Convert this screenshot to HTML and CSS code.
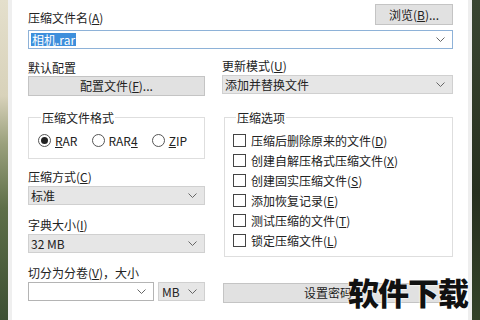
FILE: index.html
```html
<!DOCTYPE html>
<html lang="zh-CN">
<head>
  <meta charset="UTF-8">
  <title>压缩文件名和参数</title>
  <link rel="stylesheet" href="styles.css">
</head>
<body>
  <div class="photo left"></div>
  <div class="window">
    <div class="dialog">
      <div class="top-row">
        <span class="label">压缩文件名(<u>A</u>)</span>
        <button class="btn browse">浏览(<u>B</u>)...</button>
      </div>
      <div class="combo edit focus">
        <span class="sel">相机.rar</span>
        <svg class="chev" width="9" height="5" viewBox="0 0 9 5"><path d="M0.5 0.5 L4.5 4.5 L8.5 0.5" fill="none" stroke="#666" stroke-width="1"/></svg>
      </div>

      <div class="cols">
        <div class="col">
          <div class="label first">默认配置</div>
          <button class="btn wide">配置文件(<u>F</u>)...</button>

          <fieldset class="group format">
            <legend>压缩文件格式</legend>
            <div class="radios">
              <span class="radio"><span class="dot on"></span><span><u>R</u>AR</span></span>
              <span class="radio"><span class="dot"></span><span>RAR<u>4</u></span></span>
              <span class="radio"><span class="dot"></span><span><u>Z</u>IP</span></span>
            </div>
          </fieldset>

          <div class="label gap">压缩方式(<u>C</u>)</div>
          <div class="combo">
            <span>标准</span>
            <svg class="chev" width="9" height="5" viewBox="0 0 9 5"><path d="M0.5 0.5 L4.5 4.5 L8.5 0.5" fill="none" stroke="#666" stroke-width="1"/></svg>
          </div>

          <div class="label gap">字典大小(<u>I</u>)</div>
          <div class="combo">
            <span>32 MB</span>
            <svg class="chev" width="9" height="5" viewBox="0 0 9 5"><path d="M0.5 0.5 L4.5 4.5 L8.5 0.5" fill="none" stroke="#666" stroke-width="1"/></svg>
          </div>

          <div class="label gap">切分为分卷(<u>V</u>)，大小</div>
          <div class="split">
            <div class="combo edit volume">
              <span></span>
              <svg class="chev" width="9" height="5" viewBox="0 0 9 5"><path d="M0.5 0.5 L4.5 4.5 L8.5 0.5" fill="none" stroke="#666" stroke-width="1"/></svg>
            </div>
            <div class="combo unit">
              <span>MB</span>
              <svg class="chev" width="9" height="5" viewBox="0 0 9 5"><path d="M0.5 0.5 L4.5 4.5 L8.5 0.5" fill="none" stroke="#666" stroke-width="1"/></svg>
            </div>
          </div>
        </div>

        <div class="col">
          <div class="label upd">更新模式(<u>U</u>)</div>
          <div class="combo">
            <span>添加并替换文件</span>
            <svg class="chev" width="9" height="5" viewBox="0 0 9 5"><path d="M0.5 0.5 L4.5 4.5 L8.5 0.5" fill="none" stroke="#666" stroke-width="1"/></svg>
          </div>

          <fieldset class="group options">
            <legend>压缩选项</legend>
            <div class="check"><span class="box"></span><span>压缩后删除原来的文件(<u>D</u>)</span></div>
            <div class="check"><span class="box"></span><span>创建自解压格式压缩文件(<u>X</u>)</span></div>
            <div class="check"><span class="box"></span><span>创建固实压缩文件(<u>S</u>)</span></div>
            <div class="check"><span class="box"></span><span>添加恢复记录(<u>E</u>)</span></div>
            <div class="check"><span class="box"></span><span>测试压缩的文件(<u>T</u>)</span></div>
            <div class="check"><span class="box"></span><span>锁定压缩文件(<u>L</u>)</span></div>
          </fieldset>

          <button class="btn password">设置密码</button>
        </div>
      </div>
    </div>
  </div>
  <div class="photo right"></div>

  <div class="watermark">软件下载</div>
</body>
</html>
```

FILE: styles.css
```css
body {
  margin: 0;
  width: 480px;
  height: 320px;
  display: flex;
  overflow: hidden;
  font-family: "Noto Sans CJK SC", "Liberation Sans", sans-serif;
  font-size: 12px;
  color: #222;
  position: relative;
}
.photo {
  width: 8px;
  flex: none;
}
.photo.left {
  background: linear-gradient(#e4dfcc 0, #d8d2ba 30%, #9aa07c 45%, #5e6f48 65%, #3c4f33 100%);
}
.photo.right {
  background: linear-gradient(#3a4632 0, #27301f 60%, #334229 100%);
}
.window {
  width: 456px;
  flex: none;
  background: #fff;
  border-left: 4px solid #efefef;
  border-right: 4px solid #eeeeee;
}
.dialog {
  padding: 0 15px 0 16px;
}
u {
  text-decoration: underline;
  text-underline-offset: 1px;
}
.label {
  line-height: 15px;
  height: 15px;
  white-space: nowrap;
}
.top-row {
  display: flex;
  justify-content: space-between;
  align-items: flex-end;
  height: 25px;
}
.btn {
  font: inherit;
  color: #222;
  background: #e1e1e1;
  border: 1px solid #c4c4c4;
  padding: 0;
  height: 21px;
  line-height: 19px;
  text-align: center;
}
.browse {
  width: 78px;
}
.combo {
  height: 19px;
  box-sizing: border-box;
  border: 1px solid #d0d0d0;
  background: #e6e6e6;
  display: flex;
  align-items: center;
  justify-content: space-between;
  padding: 0 7px 0 2px;
  line-height: 17px;
  white-space: nowrap;
}
.combo.edit {
  background: #fff;
  border-color: #b4b4b4;
}
.combo.focus {
  margin-top: 5px;
  border-color: #8eb2d8;
}
.sel {
  background: #3d8fdc;
  color: #fff;
  padding: 0 1px;
  line-height: 13px;
}
.chev {
  flex: none;
}
.cols {
  display: grid;
  grid-template-columns: 177px 231px;
  column-gap: 17px;
}
.label.first {
  margin-top: 11px;
  margin-bottom: 1px;
}
.label.upd {
  margin-top: 9px;
  margin-bottom: 2px;
}
.wide {
  width: 100%;
  height: 20px;
  line-height: 18px;
}
.group {
  margin: 0;
  border: 1px solid #dedede;
  padding: 0;
  min-width: 0;
}
.group legend {
  padding: 0 1px;
  margin-left: 3px;
  line-height: 15px;
}
.format {
  margin-top: 14px;
  padding: 9px 0 11px 9px;
}
.radios {
  display: flex;
  gap: 14px;
  height: 13px;
  align-items: center;
}
.radio {
  display: flex;
  align-items: center;
  gap: 4px;
  font-size: 12px;
}
.dot {
  width: 11px;
  height: 11px;
  border: 1px solid #555;
  border-radius: 50%;
  display: flex;
  align-items: center;
  justify-content: center;
}
.dot.on::after {
  content: "";
  width: 7px;
  height: 7px;
  border-radius: 50%;
  background: #222;
}
.options {
  margin: 16px 0 0 2px;
  padding: 5px 0 6px 8px;
}
.check {
  display: flex;
  align-items: center;
  gap: 5px;
  height: 20px;
  white-space: nowrap;
}
.box {
  width: 11px;
  height: 11px;
  border: 1px solid #444;
  background: #fff;
  flex: none;
}
.label.gap {
  margin-top: 10px;
  margin-bottom: 2px;
}
.col .label.gap ~ .label.gap {
  margin-top: 12px;
}
.split {
  display: flex;
  gap: 4px;
}
.volume {
  width: 126px;
}
.unit {
  flex: 1;
  padding-left: 3px;
}
.password {
  margin-top: 26px;
  margin-left: 1px;
  width: 230px;
  height: 20px;
  line-height: 18px;
  text-align: left;
  padding-left: 80px;
}
.watermark {
  position: absolute;
  left: 348px;
  top: 275px;
  font-family: "Noto Sans CJK SC", sans-serif;
  font-weight: 900;
  font-size: 31px;
  line-height: 33px;
  color: #111;
  letter-spacing: -1px;
  text-shadow: 0 0 2px #fff, 0 0 2px #fff;
}
```
